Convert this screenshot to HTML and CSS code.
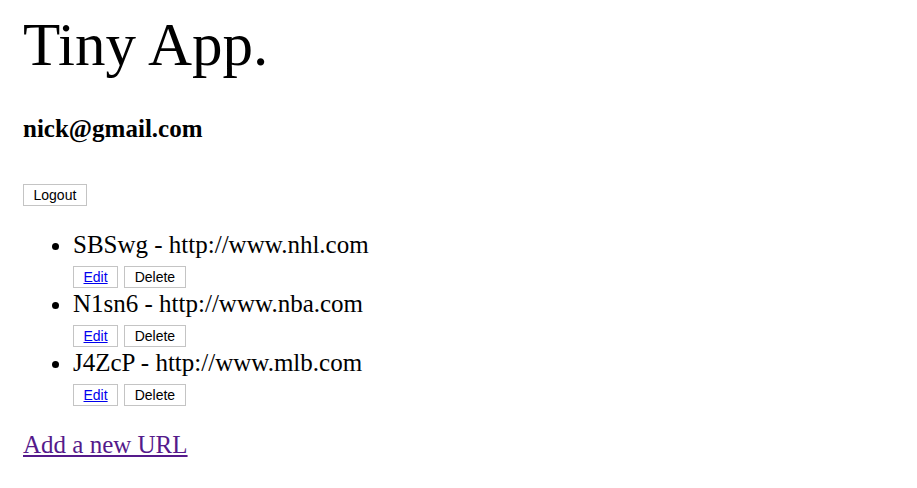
FILE: index.html
```html
<!DOCTYPE html>
<html>
<head>
<meta charset="utf-8">
<title>Tiny App</title>
<link rel="stylesheet" href="styles.css">
</head>
<body>
<main class="page">
  <h1 class="title">Tiny App.</h1>
  <h3 class="user">nick@gmail.com</h3>
  <form class="logout-form"><button class="btn" type="button">Logout</button></form>
  <ul class="urls">
    <li class="url-item">
      <div class="url-text">SBSwg - http://www.nhl.com</div>
      <div class="actions"><button class="btn" type="button"><a class="btn-link" href="#">Edit</a></button><button class="btn" type="button">Delete</button></div>
    </li>
    <li class="url-item">
      <div class="url-text">N1sn6 - http://www.nba.com</div>
      <div class="actions"><button class="btn" type="button"><a class="btn-link" href="#">Edit</a></button><button class="btn" type="button">Delete</button></div>
    </li>
    <li class="url-item">
      <div class="url-text">J4ZcP - http://www.mlb.com</div>
      <div class="actions"><button class="btn" type="button"><a class="btn-link" href="#">Edit</a></button><button class="btn" type="button">Delete</button></div>
    </li>
  </ul>
  <a class="add-link" href="#">Add a new URL</a>
</main>
</body>
</html>
```

FILE: styles.css
```css
html, body { margin: 0; padding: 0; background: #fff; }
body { font-family: "Liberation Serif", "Times New Roman", serif; color: #000; }
.page { padding: 10px 23px; }
.title { font-size: 61px; font-weight: normal; margin: 0; line-height: 70px; }
.user { font-size: 25px; font-weight: bold; margin: 34px 0 0; line-height: 29px; }
.logout-form { margin: 41px 0 0; display: flex; }
.btn {
  font-family: "Liberation Sans", Arial, sans-serif;
  font-size: 14px;
  line-height: 16px;
  background: #fff;
  border: 1px solid #c4c4c4;
  border-radius: 0;
  padding: 2px 9.5px;
  height: 22px;
  color: #000;
  margin: 0;
}
.btn-link { color: #0000ee; text-decoration: underline; }
.urls { list-style: disc; margin: 24px 0 0; padding: 0 0 0 50px; }
.url-item { font-size: 25px; }
.url-text { line-height: 29px; }
.actions { display: flex; gap: 6px; margin: 7px 0 1px; }
.add-link { display: inline-block; margin-top: 23px; font-size: 25px; line-height: 29px; color: #551a8b; text-decoration: underline; }
```
